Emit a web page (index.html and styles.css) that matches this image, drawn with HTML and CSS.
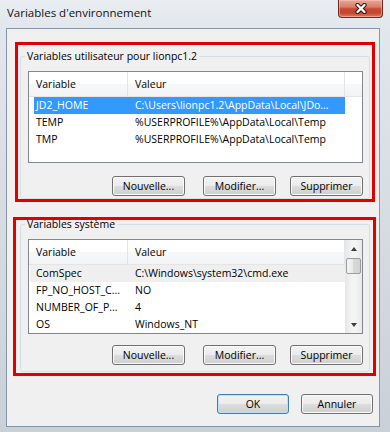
FILE: index.html
```html
<!DOCTYPE html>
<html lang="fr">
<head>
    <meta charset="utf-8">
    <meta name="viewport" content="width=device-width, initial-scale=1.0">
    <title>Variables d'environnement</title>
    <link rel="stylesheet" href="styles.css">
</head>
<body>
    <div class="window">
        <div class="titlebar">
            <span class="title">Variables d'environnement</span>
            <button class="close-btn" title="Fermer">
                <svg width="14" height="11" viewBox="0 0 14 11">
                    <path d="M3.5 2 L10.5 9 M10.5 2 L3.5 9" stroke="#3d1610" stroke-width="4.4" stroke-linecap="round"/>
                    <path d="M3.5 2 L10.5 9 M10.5 2 L3.5 9" stroke="#fff" stroke-width="2.4" stroke-linecap="round"/>
                </svg>
            </button>
        </div>

        <div class="client">
            <!-- user variables -->
            <div class="mark mark-user">
                <fieldset class="group group-user">
                    <legend>Variables utilisateur pour lionpc1.2</legend>
                    <div class="listview list-user">
                        <div class="lv-main">
                            <div class="lv-head">
                                <span class="lv-col col-name">Variable</span>
                                <span class="lv-col col-value">Valeur</span>
                                <span class="lv-col col-fill"></span>
                            </div>
                            <div class="lv-row is-selected">
                                <span class="lv-col col-name">JD2_HOME</span>
                                <span class="lv-col col-value">C:\Users\lionpc1.2\AppData\Local\JDo...</span>
                            </div>
                            <div class="lv-row">
                                <span class="lv-col col-name">TEMP</span>
                                <span class="lv-col col-value">%USERPROFILE%\AppData\Local\Temp</span>
                            </div>
                            <div class="lv-row">
                                <span class="lv-col col-name">TMP</span>
                                <span class="lv-col col-value">%USERPROFILE%\AppData\Local\Temp</span>
                            </div>
                        </div>
                    </div>
                    <div class="group-actions">
                        <button class="btn btn-new">Nouvelle...</button>
                        <button class="btn">Modifier...</button>
                        <button class="btn">Supprimer</button>
                    </div>
                </fieldset>
            </div>

            <!-- system variables -->
            <div class="mark mark-system">
                <fieldset class="group group-system">
                    <legend>Variables système</legend>
                    <div class="listview list-system">
                        <div class="lv-main">
                            <div class="lv-head">
                                <span class="lv-col col-name">Variable</span>
                                <span class="lv-col col-value">Valeur</span>
                            </div>
                            <div class="lv-row is-inactive">
                                <span class="lv-col col-name">ComSpec</span>
                                <span class="lv-col col-value">C:\Windows\system32\cmd.exe</span>
                            </div>
                            <div class="lv-row">
                                <span class="lv-col col-name">FP_NO_HOST_C...</span>
                                <span class="lv-col col-value">NO</span>
                            </div>
                            <div class="lv-row">
                                <span class="lv-col col-name">NUMBER_OF_P...</span>
                                <span class="lv-col col-value">4</span>
                            </div>
                            <div class="lv-row">
                                <span class="lv-col col-name">OS</span>
                                <span class="lv-col col-value">Windows_NT</span>
                            </div>
                        </div>
                        <div class="scrollbar">
                            <span class="sb-arrow sb-up"></span>
                            <span class="sb-thumb"></span>
                            <span class="sb-track"></span>
                            <span class="sb-arrow sb-down"></span>
                        </div>
                    </div>
                    <div class="group-actions">
                        <button class="btn btn-new">Nouvelle...</button>
                        <button class="btn">Modifier...</button>
                        <button class="btn">Supprimer</button>
                    </div>
                </fieldset>
            </div>

            <div class="dialog-actions">
                <button class="btn btn-default">OK</button>
                <button class="btn">Annuler</button>
            </div>
        </div>
    </div>
</body>
</html>
```

FILE: styles.css
```css
body {
    margin: 0;
    background: #c3cad1;
    font-family: "Open Sans", "Noto Sans", sans-serif;
    font-size: 10.5px;
    color: #000;
}

.window {
    width: 390px;
    height: 432px;
    display: flex;
    flex-direction: column;
    background: linear-gradient(to bottom, #e9edf1 0, #e1e7ec 28px, #c9d0d7 100%);
}

/* title bar */
.titlebar {
    height: 28px;
    display: flex;
    align-items: flex-start;
    padding: 0 7px;
    flex-shrink: 0;
}

.title {
    font-size: 11.5px;
    line-height: 16px;
    padding-top: 5px;
    color: #111;
}

.close-btn {
    margin-left: auto;
    width: 45px;
    height: 18px;
    padding: 0;
    border: 1px solid #6e2a20;
    border-top: none;
    border-radius: 0 0 4px 4px;
    background: linear-gradient(to bottom, #e9a797 0%, #d9806c 40%, #c44a33 52%, #c8442c 75%, #dc7a5f 100%);
    box-shadow: inset 0 0 0 1px rgba(255, 210, 200, 0.45);
    display: flex;
    align-items: center;
    justify-content: center;
}

/* client area */
.client {
    flex: 1;
    margin: 0 10px 5px 6px;
    border: 1px solid #8796a4;
    background: #f0f0f0;
    display: flex;
    flex-direction: column;
}

/* red annotation frames */
.mark {
    border: 3px solid #e00000;
    box-sizing: border-box;
}

.mark-user {
    width: 360px;
    margin: 13px 0 0 8px;
}

.mark-system {
    width: 363px;
    margin: 15px 0 0 6px;
}

/* group boxes */
.group {
    border: 1px solid #d5dfe5;
    border-radius: 3px;
    padding: 0 6px 0 7px;
    min-width: 0;
}

.group legend {
    padding: 0 2px;
    margin-left: -3px;
    line-height: 16px;
}

.group-user {
    margin: 3px 2px 0 2px;
    padding-top: 7px;
    padding-bottom: 2px;
}

.group-system {
    margin: -4px 3px 1px 4px;
    padding-top: 7px;
    padding-bottom: 6px;
}

/* list views */
.listview {
    display: flex;
    background: #fff;
    border: 1px solid #828790;
    box-sizing: border-box;
}

.list-user {
    height: 92px;
}

.list-system {
    height: 95px;
}

.lv-main {
    flex: 1;
}

.lv-head {
    display: flex;
    height: 25px;
    border-bottom: 1px solid #e5e5e5;
    box-sizing: border-box;
    background: linear-gradient(to bottom, #ffffff 0%, #ffffff 50%, #f7f8f9 50%, #f2f3f5 100%);
}

.lv-head .lv-col {
    line-height: 24px;
    border-right: 1px solid #e1e5ea;
}

.lv-row {
    display: flex;
    height: 17px;
    line-height: 17px;
}

.lv-col {
    box-sizing: border-box;
    padding-left: 7px;
    white-space: nowrap;
    overflow: hidden;
}

.col-name {
    width: 99px;
}

.col-value {
    width: 217px;
}

.col-fill {
    flex: 1;
    border-right: none !important;
}

.lv-row.is-selected {
    margin-left: 5px;
    width: 311px;
    background: #3399ff;
    color: #fff;
}

.lv-row.is-selected .col-name {
    width: 94px;
    padding-left: 2px;
}

.lv-row.is-inactive {
    width: 315px;
    margin-left: 1px;
    background: #efefef;
}

.lv-row.is-inactive .col-name {
    width: 98px;
    padding-left: 6px;
}

/* scroll bar */
.scrollbar {
    width: 17px;
    display: flex;
    flex-direction: column;
    background: linear-gradient(to right, #e6e6e6, #f4f4f4 40%, #f4f4f4 60%, #e9e9e9);
}

.sb-arrow {
    height: 17px;
    display: flex;
    align-items: center;
    justify-content: center;
}

.sb-arrow::before {
    content: "";
    border-left: 3.5px solid transparent;
    border-right: 3.5px solid transparent;
}

.sb-up::before {
    border-bottom: 4px solid #3c3c3c;
}

.sb-down::before {
    border-top: 4px solid #3c3c3c;
}

.sb-thumb {
    height: 16px;
    margin: 1px 1px 0 1px;
    border: 1px solid #9c9c9c;
    border-radius: 2px;
    box-sizing: border-box;
    background: linear-gradient(to right, #f4f4f4, #e8e8e8 50%, #d9d9d9 50%, #d3d3d3);
}

.sb-track {
    flex: 1;
}

/* buttons */
.group-actions {
    display: flex;
    justify-content: flex-end;
    gap: 14px;
}

.group-user .group-actions {
    margin-top: 13px;
}

.group-system .group-actions {
    margin-top: 11px;
}

.btn-new {
    margin-right: 4px;
}

.btn {
    width: 73px;
    height: 20px;
    padding: 0;
    font-family: inherit;
    font-size: 10.5px;
    color: #000;
    border: 1px solid #707070;
    border-radius: 3px;
    background: linear-gradient(to bottom, #f3f3f3 0%, #ebebeb 50%, #dddddd 50%, #cfcfcf 100%);
    box-shadow: inset 0 0 0 1px #fbfbfb;
}

.btn-default {
    border-color: #3c7fb1;
    box-shadow: inset 0 0 0 1px #b8e2f8;
}

.dialog-actions {
    display: flex;
    justify-content: flex-end;
    gap: 12px;
    margin-top: 18px;
    padding-right: 6px;
}

.dialog-actions .btn {
    width: 72px;
}
```
